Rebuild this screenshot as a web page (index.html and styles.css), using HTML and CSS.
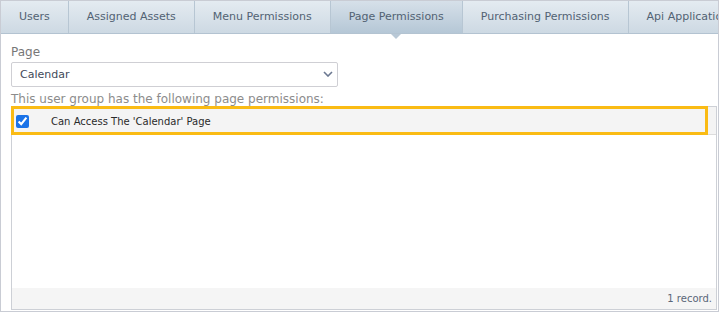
FILE: index.html
```html
<!DOCTYPE html>
<html lang="en">
<head>
  <meta charset="UTF-8" />
  <title>User Group - Page Permissions</title>
  <link rel="stylesheet" href="styles.css">
</head>
<body>
  <div class="panel">
    <div class="tabs">
      <div class="tab">Users</div>
      <div class="tab">Assigned Assets</div>
      <div class="tab">Menu Permissions</div>
      <div class="tab active">Page Permissions</div>
      <div class="tab">Purchasing Permissions</div>
      <div class="tab">Api Applications</div>
    </div>

    <div class="content">
      <div class="field-label">Page</div>
      <div class="select">
        <span>Calendar</span>
        <svg class="chevron" width="10" height="6" viewBox="0 0 10 6">
          <path d="M1 1 L5 5 L9 1" fill="none" stroke="#6b7891" stroke-width="1.6" />
        </svg>
      </div>
      <div class="hint">This user group has the following page permissions:</div>

      <div class="grid">
        <div class="row selected">
          <div class="cell-check"><input type="checkbox" checked /></div>
          <div class="cell-text">Can Access The 'Calendar' Page</div>
        </div>
        <div class="grid-body"></div>
        <div class="grid-footer">1 record.</div>
      </div>
    </div>
  </div>
</body>
</html>
```

FILE: styles.css
```css
html, body {
  margin: 0;
  padding: 0;
}

body {
  font-family: 'DejaVu Sans', Verdana, sans-serif;
  background: #fff;
}

.panel {
  height: 312px;
  box-sizing: border-box;
  border: 1px solid #c9ccd4;
  display: flex;
  flex-direction: column;
  overflow: hidden;
}

/* tab strip */
.tabs {
  display: flex;
  height: 32px;
  border-bottom: 1px solid #b3c3d1;
  white-space: nowrap;
}

.tab {
  flex: none;
  padding: 0 18px;
  line-height: 32px;
  font-size: 11px;
  color: #526273;
  border-right: 1px solid #b7c6d3;
  background: linear-gradient(#e4ebf1, #cdd9e3);
}

.tab.active {
  position: relative;
  background: linear-gradient(#d6e0e9, #b5c7d6);
}

.tab.active::after {
  content: '';
  position: absolute;
  top: calc(100% + 1px);
  left: 50%;
  margin-left: -5px;
  border-left: 5px solid transparent;
  border-right: 5px solid transparent;
  border-top: 5px solid #b8c8d6;
}

/* form area */
.content {
  flex: 1;
  display: flex;
  flex-direction: column;
  padding: 11px 1px 1px 10px;
}

.field-label {
  font-size: 12px;
  line-height: 14px;
  color: #777;
}

.select {
  margin-top: 3px;
  width: 327px;
  height: 25px;
  box-sizing: border-box;
  border: 1px solid #cfcfd4;
  border-radius: 2px;
  padding: 0 4px 0 8px;
  display: flex;
  align-items: center;
  justify-content: space-between;
  font-size: 11px;
  color: #3f4a5a;
}

.chevron {
  margin-top: -2px;
}

.hint {
  margin-top: 6px;
  font-size: 12px;
  line-height: 13px;
  color: #8c8c8c;
}

/* grid */
.grid {
  flex: 1;
  display: flex;
  flex-direction: column;
  border: 1px solid #cdd0d6;
}

.row {
  display: flex;
  align-items: center;
  height: 27px;
  border-bottom: 1px solid #dcdcdc;
  background: #f4f4f4;
  font-size: 10px;
  color: #2a2a2a;
}

.row.selected {
  position: relative;
}

.row.selected::after {
  content: '';
  position: absolute;
  top: -1px;
  left: -1px;
  width: 697px;
  height: 29px;
  box-sizing: border-box;
  border: 3px solid #fabb14;
  pointer-events: none;
}

.cell-check {
  width: 34px;
  padding-top: 2px;
}

.cell-check input {
  display: block;
  width: 13px;
  height: 13px;
  margin: 0 0 0 4px;
  accent-color: #1a73e8;
}

.cell-text {
  padding-left: 5px;
  padding-top: 1px;
}

.grid-body {
  flex: 1;
}

.grid-footer {
  height: 21px;
  line-height: 21px;
  background: #f5f5f5;
  text-align: right;
  padding-right: 4px;
  font-size: 10px;
  color: #5a6678;
}
```
